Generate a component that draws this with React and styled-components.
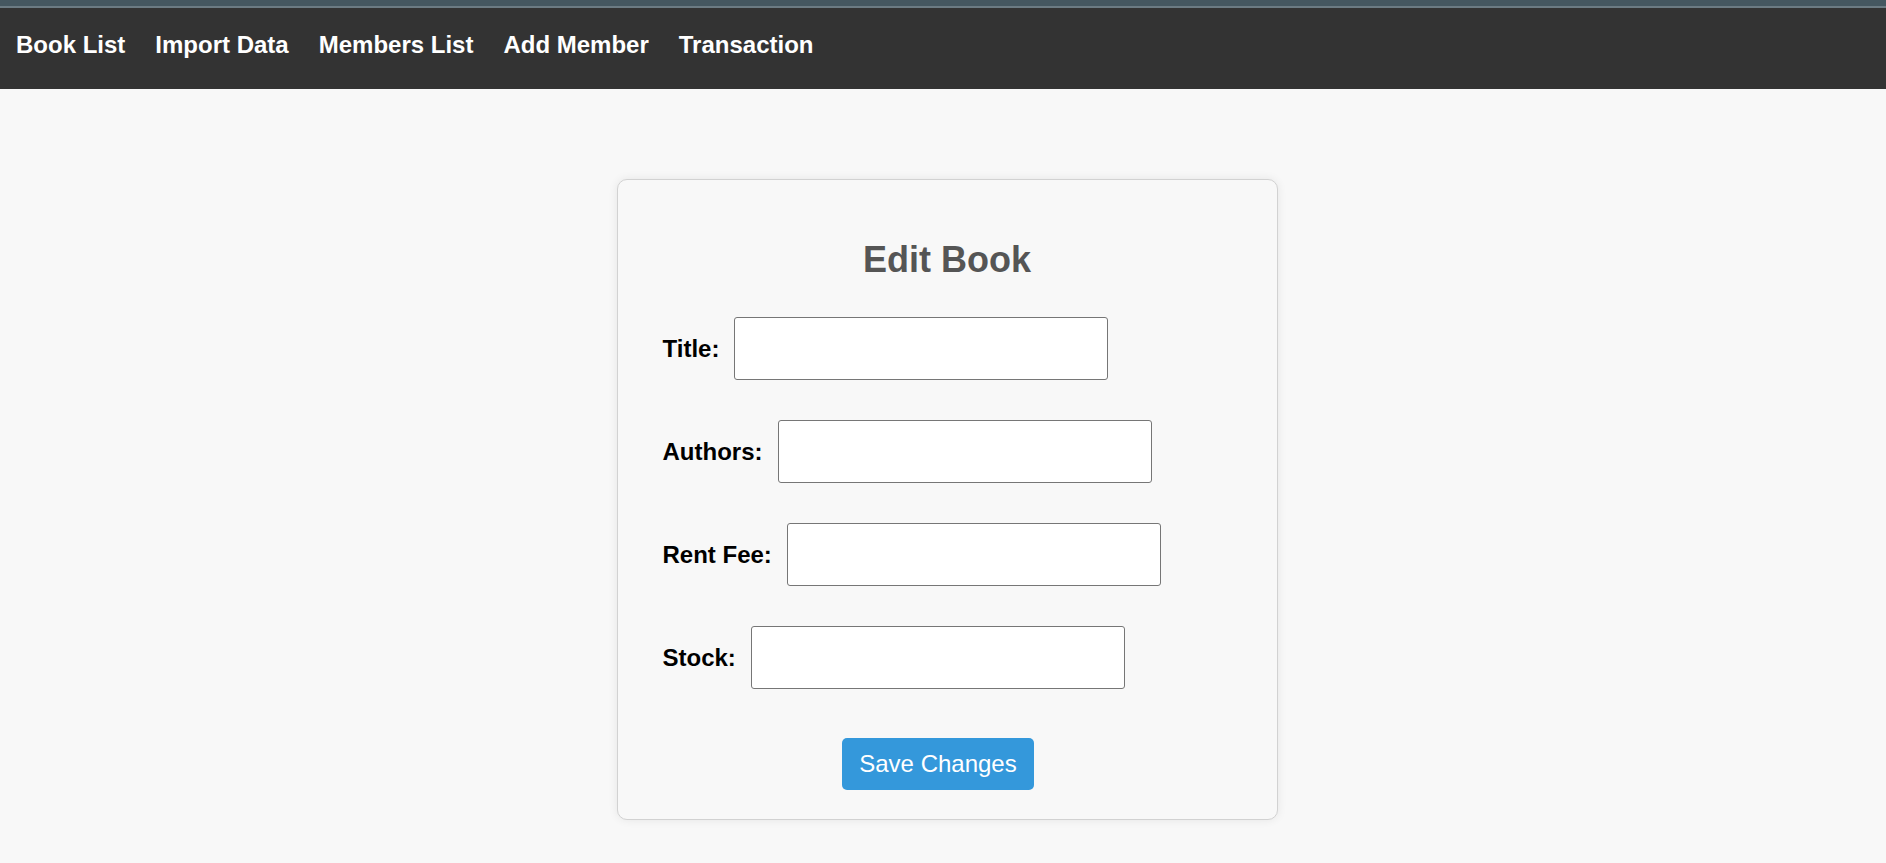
import React from 'react';
import styled, {createGlobalStyle} from 'styled-components';

const GlobalStyle = createGlobalStyle`
body{
    margin:0;
    background:#f8f8f8;
    font-family:"Liberation Sans", Arial, sans-serif;
}
`;

const TopStrip = styled.div`
height:6px;
background:#455760;
border-bottom:2px solid #6c7b83;
`;

const Nav = styled.nav`
display:flex;
gap:30px;
height:81px;
box-sizing:border-box;
padding:23px 0 0 16px;
background:#333;
`;

const NavLink = styled.a`
color:#fff;
font-size:24px;
font-weight:bold;
line-height:1.15;
text-decoration:none;
cursor:pointer;
`;

const Page = styled.main`
display:flex;
justify-content:center;
padding:90px 0 40px 8px;
`;

const Card = styled.div`
width:661px;
height:641px;
box-sizing:border-box;
padding:0 45px;
border:1px solid #d2d2d2;
border-radius:10px;
background:#f8f8f8;
box-shadow:0 0 10px rgba(0,0,0,0.08);
`;

const Heading = styled.h2`
margin:59px 0 37px;
text-align:center;
color:#555;
font-size:36px;
line-height:1.15;
`;

const Form = styled.form`
display:flex;
flex-direction:column;
gap:40px;
`;

const Row = styled.div`
display:flex;
align-items:center;
gap:15px;
`;

const Label = styled.label`
color:#000;
font-size:24px;
font-weight:bold;
`;

const Input = styled.input`
width:374px;
height:63px;
box-sizing:border-box;
border:1px solid #767676;
border-radius:3px;
background:#fff;
font-size:20px;
padding:0 8px;
`;

const Actions = styled.div`
display:flex;
justify-content:center;
padding-right:18px;
margin-top:9px;
`;

const Button = styled.button`
height:52px;
padding:0 17px;
border:none;
border-radius:5px;
background:#3498db;
color:#fff;
font-family:"Liberation Sans", Arial, sans-serif;
font-size:24px;
cursor:pointer;
`;

const fields = ['Title', 'Authors', 'Rent Fee', 'Stock'];
const links = ['Book List', 'Import Data', 'Members List', 'Add Member', 'Transaction'];

const App = () => {
    return (
        <>
            <GlobalStyle />
            <TopStrip />
            <Nav>
                {links.map(l => <NavLink key={l}>{l}</NavLink>)}
            </Nav>
            <Page>
                <Card>
                    <Heading>Edit Book</Heading>
                    <Form onSubmit={e => e.preventDefault()}>
                        {fields.map(f => (
                            <Row key={f}>
                                <Label>{f}:</Label>
                                <Input type="text" />
                            </Row>
                        ))}
                        <Actions>
                            <Button type="submit">Save Changes</Button>
                        </Actions>
                    </Form>
                </Card>
            </Page>
        </>
    );
};

export default App;
